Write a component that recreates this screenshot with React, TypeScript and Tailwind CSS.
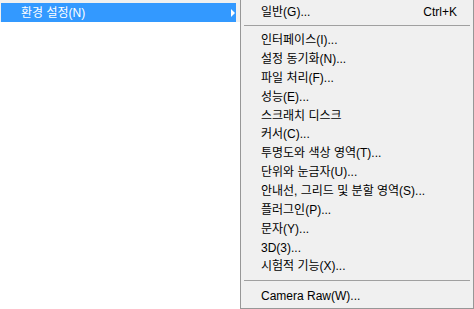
const FONT = {
  fontFamily: '"Segoe UI", "Liberation Sans", "Noto Sans CJK KR", sans-serif',
};

const ITEMS = [
  "인터페이스(I)...",
  "설정 동기화(N)...",
  "파일 처리(F)...",
  "성능(E)...",
  "스크래치 디스크",
  "커서(C)...",
  "투명도와 색상 영역(T)...",
  "단위와 눈금자(U)...",
  "안내선, 그리드 및 분할 영역(S)...",
  "플러그인(P)...",
  "문자(Y)...",
  "3D(3)...",
  "시험적 기능(X)...",
];

function Row({ label, shortcut }: { label: string; shortcut?: string }) {
  return (
    <div className="h-[18.85px] flex items-center justify-between pl-[20px] pr-[16px] text-[12px] text-black leading-none">
      <span>{label}</span>
      {shortcut && <span>{shortcut}</span>}
    </div>
  );
}

function Separator() {
  return <div className="mx-[3px] h-[1px] bg-[#a0a0a0]" />;
}

export default function App() {
  return (
    <div className="w-[474px] h-[309px] bg-white flex overflow-hidden" style={FONT}>
      <div className="w-[240px] flex flex-col">
        <div className="h-[22px] bg-[#f0f0f0] pt-[3px] pl-[1px] pr-[4px]">
          <div className="h-[19px] bg-[#3399ff] flex items-center justify-between pl-[20px] pr-[1px] text-white text-[12px] leading-none">
            <span>환경 설정(N)</span>
            <svg width="4" height="8" viewBox="0 0 4 8">
              <path d="M0 0 L4 4 L0 8 Z" fill="white" />
            </svg>
          </div>
        </div>
      </div>
      <div className="w-[234px] h-[309px] bg-[#f0f0f0] border-l border-r border-b border-[#979797] flex flex-col">
        <div className="pt-[3px]">
          <Row label="일반(G)..." shortcut="Ctrl+K" />
        </div>
        <div className="pt-[3px] pb-[5px]">
          <Separator />
        </div>
        {ITEMS.map((item) => (
          <Row key={item} label={item} />
        ))}
        <div className="pt-[4px] pb-[6px]">
          <Separator />
        </div>
        <Row label="Camera Raw(W)..." />
      </div>
    </div>
  );
}
